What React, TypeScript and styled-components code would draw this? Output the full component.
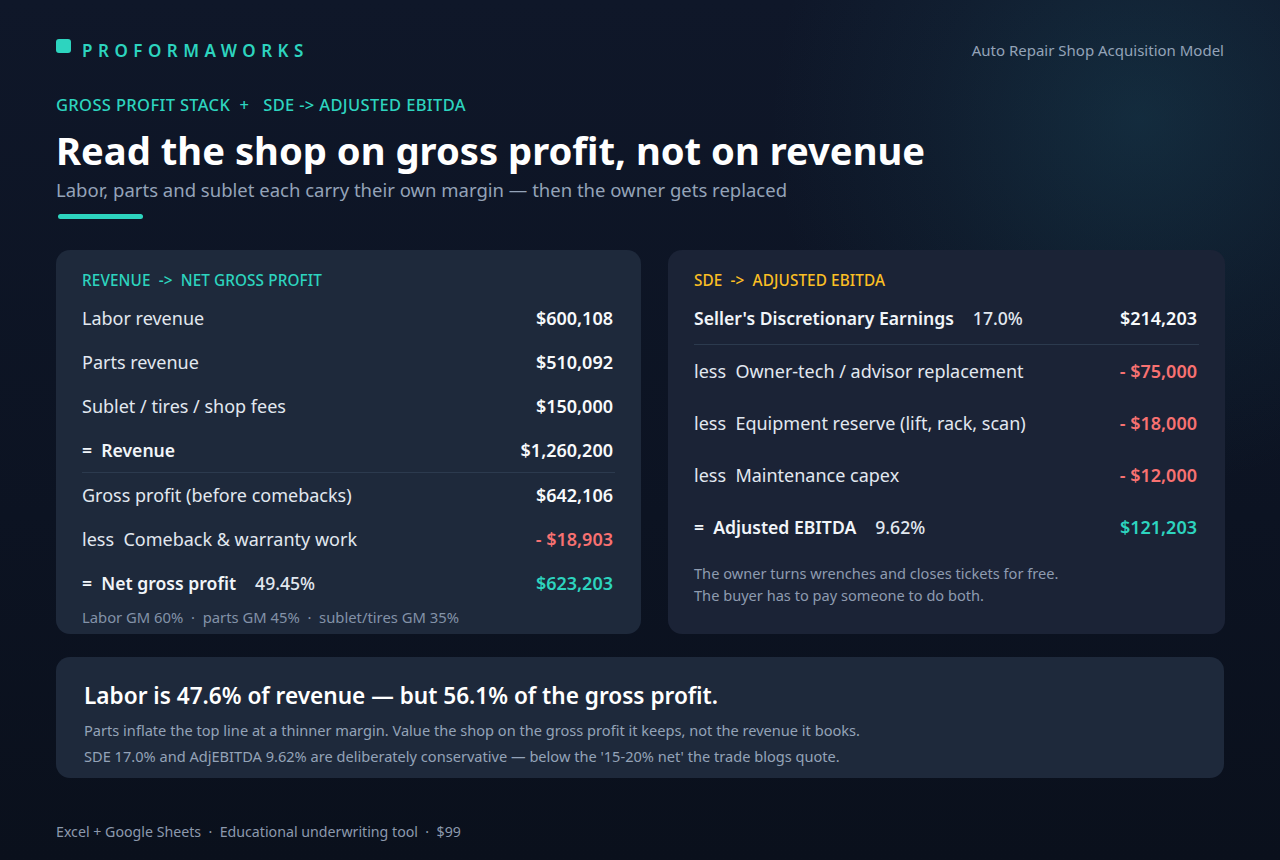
import React from 'react';
import styled, { createGlobalStyle } from 'styled-components';

const GlobalStyle = createGlobalStyle`
  html, body {
    margin: 0;
    padding: 0;
    background: #0b1120;
  }
  * {
    box-sizing: border-box;
  }
`;

const Page = styled.div`
  width: 1280px;
  height: 860px;
  overflow: hidden;
  padding: 36px 56px 0;
  font-family: 'Noto Sans', 'Open Sans', sans-serif;
  color: #e2e8f0;
  background:
    radial-gradient(circle at 1140px 120px, rgba(38, 120, 140, 0.22) 0, rgba(38, 120, 140, 0.08) 210px, transparent 370px),
    linear-gradient(180deg, #0f1729 0%, #0c1322 60%, #0a101c 100%);
`;

const TopBar = styled.header`
  display: flex;
  justify-content: space-between;
  align-items: center;
  height: 28px;
`;

const Brand = styled.div`
  display: flex;
  align-items: center;
  gap: 11px;
`;

const BrandMark = styled.span`
  width: 15px;
  height: 14px;
  border-radius: 3px;
  background: #2dd4bf;
  margin-bottom: 8px;
`;

const BrandName = styled.span`
  font-size: 17px;
  font-weight: 600;
  letter-spacing: 5.5px;
  color: #2dd4bf;
`;

const ModelName = styled.span`
  font-size: 15px;
  color: #94a3b8;
`;

const Eyebrow = styled.div`
  margin-top: 31px;
  font-size: 16.5px;
  line-height: 20px;
  font-weight: 500;
  letter-spacing: 0.35px;
  color: #2dd4bf;
  white-space: pre;
`;

const Title = styled.h1`
  margin: 11px 0 0;
  font-size: 38.2px;
  line-height: 48px;
  font-weight: 700;
  color: #ffffff;
`;

const Subtitle = styled.p`
  margin: 3px 0 0;
  font-size: 18.5px;
  line-height: 26px;
  color: #94a3b8;
`;

const AccentBar = styled.div`
  margin: 11px 0 0 2px;
  width: 85px;
  height: 5px;
  border-radius: 3px;
  background: #2dd4bf;
`;

const CardGrid = styled.div`
  margin-top: 31px;
  display: grid;
  grid-template-columns: 585px 557px;
  gap: 27px;
`;

const Card = styled.section<{ $tone: 'light' | 'dark' }>`
  border-radius: 14px;
  background: ${(p) => (p.$tone === 'light' ? '#1e293b' : '#1b2336')};
  padding: ${(p) => (p.$tone === 'light' ? '20px 28px 7px 26px' : '20px 28px 20px 26px')};
`;

const CardTitle = styled.div<{ $accent: string }>`
  font-size: 15.3px;
  line-height: 20px;
  font-weight: 500;
  letter-spacing: 0.1px;
  color: ${(p) => p.$accent};
  white-space: pre;
  margin-bottom: 6px;
`;

const Row = styled.div<{ $h: number }>`
  display: flex;
  justify-content: space-between;
  align-items: center;
  height: ${(p) => p.$h}px;
  font-size: 18px;
`;

const Label = styled.span<{ $strong?: boolean }>`
  white-space: pre;
  color: ${(p) => (p.$strong ? '#f1f5f9' : '#e2e8f0')};
  font-weight: ${(p) => (p.$strong ? 600 : 400)};
  font-size: ${(p) => (p.$strong ? '17.6px' : '18px')};
`;

const Pct = styled.span`
  margin-left: 19px;
  font-weight: 500;
  color: #e2e8f0;
`;

const Value = styled.span<{ $tone?: 'neg' | 'pos' }>`
  font-size: 18px;
  font-weight: 600;
  color: ${(p) => (p.$tone === 'neg' ? '#f87171' : p.$tone === 'pos' ? '#2dd4bf' : '#f8fafc')};
`;

const Divider = styled.hr<{ $gap?: number }>`
  margin: ${(p) => p.$gap ?? 0}px -2px 0 0;
  border: 0;
  border-top: 1px solid #2c3a4e;
  height: 0;
`;

const Footnote = styled.div`
  margin-top: 2px;
  font-size: 14.8px;
  line-height: 20px;
  color: #8392a8;
  white-space: pre;
`;

const Note = styled.p`
  margin: 9px 0 0;
  font-size: 14.6px;
  line-height: 22px;
  color: #8e9bb0;
`;

const Insight = styled.section`
  margin-top: 23px;
  height: 121px;
  border-radius: 14px;
  background: #1e293b;
  padding: 22px 28px 0;
`;

const InsightHead = styled.h2`
  margin: 0;
  font-size: 22.6px;
  line-height: 34px;
  font-weight: 600;
  color: #ffffff;
`;

const InsightText = styled.p`
  margin: 4px 0 0;
  font-size: 14.6px;
  line-height: 26px;
  color: #94a3b8;
`;

const Footer = styled.footer`
  margin-top: 44px;
  font-size: 14.2px;
  line-height: 20px;
  color: #8c99ad;
  white-space: pre;
`;

const revenueRows = [
  { label: 'Labor revenue', value: '$600,108' },
  { label: 'Parts revenue', value: '$510,092' },
  { label: 'Sublet / tires / shop fees', value: '$150,000' },
];

const ebitdaLess = [
  { label: 'less  Owner-tech / advisor replacement', value: '- $75,000' },
  { label: 'less  Equipment reserve (lift, rack, scan)', value: '- $18,000' },
  { label: 'less  Maintenance capex', value: '- $12,000' },
];

const App: React.FC = () => {
  return (
    <>
      <GlobalStyle />
      <Page>
        <TopBar>
          <Brand>
            <BrandMark />
            <BrandName>PROFORMAWORKS</BrandName>
          </Brand>
          <ModelName>Auto Repair Shop Acquisition Model</ModelName>
        </TopBar>

        <Eyebrow>{'GROSS PROFIT STACK  +   SDE -> ADJUSTED EBITDA'}</Eyebrow>
        <Title>Read the shop on gross profit, not on revenue</Title>
        <Subtitle>Labor, parts and sublet each carry their own margin — then the owner gets replaced</Subtitle>
        <AccentBar />

        <CardGrid>
          {/* Revenue stack */}
          <Card $tone="light">
            <CardTitle $accent="#2dd4bf">{'REVENUE  ->  NET GROSS PROFIT'}</CardTitle>
            {revenueRows.map((r) => (
              <Row key={r.label} $h={44}>
                <Label>{r.label}</Label>
                <Value>{r.value}</Value>
              </Row>
            ))}
            <Row $h={44}>
              <Label $strong>{'=  Revenue'}</Label>
              <Value>$1,260,200</Value>
            </Row>
            <Divider />
            <Row $h={44}>
              <Label>Gross profit (before comebacks)</Label>
              <Value>$642,106</Value>
            </Row>
            <Row $h={44}>
              <Label>{'less  Comeback & warranty work'}</Label>
              <Value $tone="neg">- $18,903</Value>
            </Row>
            <Row $h={44}>
              <Label $strong>
                {'=  Net gross profit'}
                <Pct>49.45%</Pct>
              </Label>
              <Value $tone="pos">$623,203</Value>
            </Row>
            <Footnote>{'Labor GM 60%  ·  parts GM 45%  ·  sublet/tires GM 35%'}</Footnote>
          </Card>

          {/* SDE bridge */}
          <Card $tone="dark">
            <CardTitle $accent="#fbbf24">{'SDE  ->  ADJUSTED EBITDA'}</CardTitle>
            <Row $h={44}>
              <Label $strong>
                Seller's Discretionary Earnings
                <Pct>17.0%</Pct>
              </Label>
              <Value>$214,203</Value>
            </Row>
            <Divider $gap={4} />
            {ebitdaLess.map((r) => (
              <Row key={r.label} $h={52}>
                <Label>{r.label}</Label>
                <Value $tone="neg">{r.value}</Value>
              </Row>
            ))}
            <Row $h={52}>
              <Label $strong>
                {'=  Adjusted EBITDA'}
                <Pct>9.62%</Pct>
              </Label>
              <Value $tone="pos">$121,203</Value>
            </Row>
            <Note>
              The owner turns wrenches and closes tickets for free.
              <br />
              The buyer has to pay someone to do both.
            </Note>
          </Card>
        </CardGrid>

        <Insight>
          <InsightHead>Labor is 47.6% of revenue — but 56.1% of the gross profit.</InsightHead>
          <InsightText>
            Parts inflate the top line at a thinner margin. Value the shop on the gross profit it keeps, not the revenue it books.
            <br />
            SDE 17.0% and AdjEBITDA 9.62% are deliberately conservative — below the '15-20% net' the trade blogs quote.
          </InsightText>
        </Insight>

        <Footer>{'Excel + Google Sheets  ·  Educational underwriting tool  ·  $99'}</Footer>
      </Page>
    </>
  );
};

export default App;
